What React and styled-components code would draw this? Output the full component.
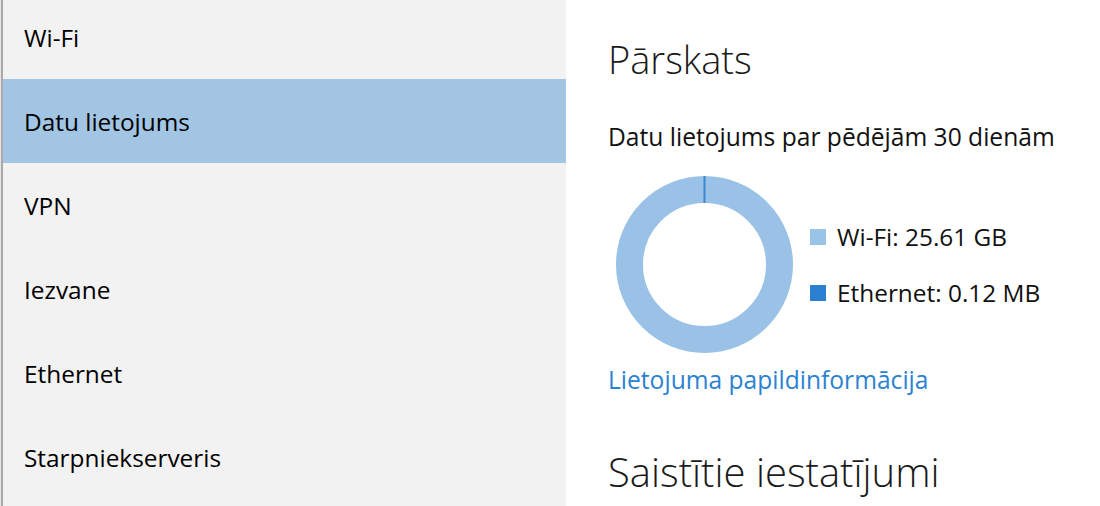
import React from 'react';
import styled, { createGlobalStyle } from 'styled-components';

const GlobalStyle = createGlobalStyle`
  html, body {
    margin: 0;
    padding: 0;
    background: #ffffff;
    font-family: 'Open Sans', 'Noto Sans', sans-serif;
    overflow: hidden;
  }
`;

const Page = styled.div`
  display: flex;
  width: 1100px;
  height: 506px;
  overflow: hidden;
`;

const Sidebar = styled.nav`
  width: 563px;
  flex-shrink: 0;
  height: 100%;
  background: #f2f2f2;
  border-left: 2px solid #a9a9a9;
  box-shadow: -1px 0 0 #e6e6e6;
  margin-left: 1px;
  overflow: hidden;
`;

const NavList = styled.ul`
  list-style: none;
  margin: -5px 0 0 0;
  padding: 0;
`;

const NavItem = styled.li`
  height: 84px;
  display: flex;
  align-items: center;
  padding-left: 21px;
  font-size: 24.4px;
  color: #000;
  background: ${(p) => (p.$active ? '#a2c5e4' : 'transparent')};
`;

const Content = styled.main`
  flex: 1;
  padding: 33px 0 0 42px;
  display: flex;
  flex-direction: column;
  align-items: flex-start;
`;

const Heading = styled.h1`
  margin: 0;
  font-size: 38px;
  font-weight: 300;
  line-height: 52px;
  color: #1a1a1a;
`;

const Subtitle = styled.p`
  margin: 35px 0 0 0;
  font-size: 24.6px;
  line-height: 34px;
  color: #111;
`;

const UsageRow = styled.div`
  display: flex;
  align-items: center;
  gap: 17px;
  margin: 22px 0 0 8px;
`;

const Legend = styled.ul`
  list-style: none;
  margin: 0;
  padding: 0;
  display: flex;
  flex-direction: column;
  gap: 22px;
`;

const LegendItem = styled.li`
  display: flex;
  align-items: center;
  gap: 11px;
  font-size: 24.4px;
  line-height: 34px;
  color: #111;
`;

const Swatch = styled.span`
  width: 16px;
  height: 16px;
  background: ${(p) => p.$color};
`;

const MoreLink = styled.a`
  margin-top: 10px;
  font-size: 24.6px;
  line-height: 34px;
  color: #2b82d3;
  text-decoration: none;
`;

const SectionHeading = styled(Heading)`
  margin-top: 49px;
  font-size: 40px;
`;

const Donut = () => (
  <svg width="177" height="177" viewBox="0 0 177 177">
    <circle cx="88.5" cy="88.5" r="75" fill="none" stroke="#9ac2e6" strokeWidth="27" />
    <line x1="88.5" y1="0" x2="88.5" y2="27" stroke="#3b87d0" strokeWidth="2" />
  </svg>
);

const navItems = ['Wi-Fi', 'Datu lietojums', 'VPN', 'Iezvane', 'Ethernet', 'Starpniekserveris'];

export default function App() {
  return (
    <>
      <GlobalStyle />
      <Page>
        <Sidebar>
          <NavList>
            {navItems.map((item) => (
              <NavItem key={item} $active={item === 'Datu lietojums'}>
                {item}
              </NavItem>
            ))}
          </NavList>
        </Sidebar>
        <Content>
          <Heading>Pārskats</Heading>
          <Subtitle>Datu lietojums par pēdējām 30 dienām</Subtitle>
          <UsageRow>
            <Donut />
            <Legend>
              <LegendItem>
                <Swatch $color="#9ac3e8" />
                Wi-Fi: 25.61 GB
              </LegendItem>
              <LegendItem>
                <Swatch $color="#2a7fd0" />
                Ethernet: 0.12 MB
              </LegendItem>
            </Legend>
          </UsageRow>
          <MoreLink href="#">Lietojuma papildinformācija</MoreLink>
          <SectionHeading>Saistītie iestatījumi</SectionHeading>
        </Content>
      </Page>
    </>
  );
}
